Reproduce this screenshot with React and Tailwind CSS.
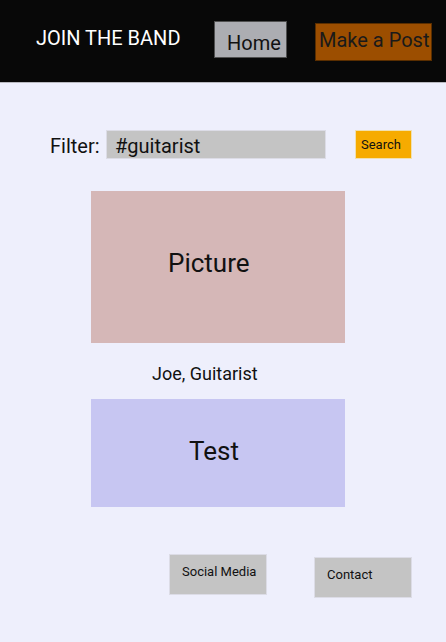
import React from "react";

export default function App() {
    return (
        <div className="min-h-screen bg-[#eeeffc] font-['Roboto',sans-serif] text-[#111]">
            <header className="flex h-[83px] items-start border-b border-[#b9b9c0] bg-[#080808] pl-[36px]">
                <span className="mt-[26px] w-[142px] shrink-0 whitespace-nowrap text-[20px] leading-[24px] text-white">
                    JOIN THE BAND
                </span>
                <button className="ml-[36px] mt-[21px] flex h-[37px] w-[73px] shrink-0 items-start border border-[#505050] bg-[#acadb2] pl-[12px] pt-[9px] text-[20px] leading-[24px] text-[#111]">
                    Home
                </button>
                <button className="ml-[28px] mt-[23px] flex h-[38px] w-[117px] shrink-0 items-start whitespace-nowrap border border-[#5a2e00] bg-[#9c4e00] pl-[3px] pt-[4px] text-[20px] leading-[24px] text-[#1a1a1a]">
                    Make a Post
                </button>
            </header>

            <main className="flex flex-col items-start pt-[47px]">
                <div className="flex items-start pl-[50px]">
                    <span className="mt-[4px] w-[56px] text-[20px] leading-[24px]">Filter:</span>
                    <div className="h-[29px] w-[220px] border border-[#dcdce6] bg-[#c4c4c4] pl-[8px] pt-[3px] text-[20px] leading-[24px]">
                        #guitarist
                    </div>
                    <button className="ml-[29px] flex h-[29px] w-[57px] items-start border border-[#f0e0b0] bg-[#f6ab00] pl-[5px] pt-[6px] text-[13px] leading-[16px]">
                        Search
                    </button>
                </div>

                <div className="ml-[91px] mt-[32px] h-[152px] w-[254px] bg-[#d5b7b7] pl-[77px] pt-[57px] text-[26px] leading-[30px]">
                    Picture
                </div>

                <p className="ml-[152px] mt-[20px] text-[18px] leading-[22px]">Joe, Guitarist</p>

                <div className="ml-[91px] mt-[14px] h-[108px] w-[254px] bg-[#c7c6f2] pl-[98px] pt-[37px] text-[26px] leading-[30px]">
                    Test
                </div>

                <div className="mt-[47px] flex items-start pl-[169px]">
                    <button className="flex h-[41px] w-[98px] items-start border border-[#dcdce6] bg-[#c4c4c4] pl-[12px] pt-[9px] text-[13px] leading-[16px]">
                        Social Media
                    </button>
                    <button className="ml-[47px] mt-[3px] flex h-[41px] w-[98px] items-start border border-[#dcdce6] bg-[#c4c4c4] pl-[12px] pt-[9px] text-[13px] leading-[16px]">
                        Contact
                    </button>
                </div>
            </main>
        </div>
    );
}
